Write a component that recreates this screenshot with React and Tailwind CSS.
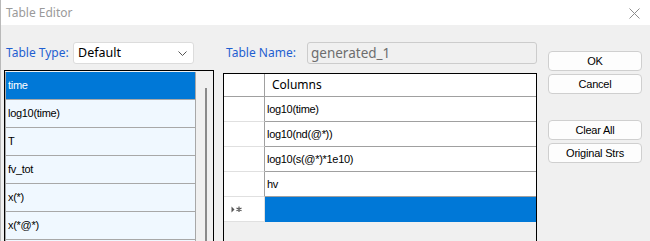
import React from "react";

const listItems = ["time", "log10(time)", "T", "fv_tot", "x(*)", "x(*@*)", ""];
const rows = ["log10(time)", "log10(nd(@*))", "log10(s(@*)*1e10)", "hv"];

function Btn({ children, className = "" }) {
  return (
    <div
      className={
        "flex h-[20px] w-[94px] items-center justify-center rounded-[4px] border border-[#cfcfcf] bg-[#fdfdfd] text-[11px] text-black [font-family:'Liberation_Sans',Arial,sans-serif] tracking-[-0.2px] " +
        className
      }
    >
      {children}
    </div>
  );
}

export default function App() {
  return (
    <div className="flex h-[241px] w-[650px] flex-col overflow-hidden border-l border-[#b9b9b9] bg-[#f0f0f0] [font-family:'Noto_Sans',sans-serif]">
      {/* title bar */}
      <div className="flex h-[25px] shrink-0 items-center justify-between bg-white pl-[5px] pr-[10px]">
        <span className="text-[12px] text-[#9a9a9a]">Table Editor</span>
        <svg width="11" height="11" viewBox="0 0 11 11" className="mt-[1px]">
          <path d="M0.5 0.5 L10.5 10.5 M10.5 0.5 L0.5 10.5" stroke="#8c8c8c" strokeWidth="1" />
        </svg>
      </div>

      {/* body */}
      <div className="flex flex-1 pt-[17px]">
        {/* left column */}
        <div className="ml-[3px] flex w-[210px] flex-col">
          <div className="flex h-[22px] items-center">
            <span className="w-[69px] pl-[2px] text-[12px] text-[#1f5fd1]">Table Type:</span>
            <div className="flex h-[22px] w-[121px] items-center justify-between rounded-[3px] border border-[#dcdcdc] bg-white pl-[4px] pr-[6px]">
              <span className="text-[12.5px] text-black">Default</span>
              <svg width="9" height="5" viewBox="0 0 9 5">
                <path d="M0.5 0.5 L4.5 4.5 L8.5 0.5" fill="none" stroke="#555" strokeWidth="1" />
              </svg>
            </div>
          </div>
          <div className="mt-[6px] flex flex-1 border border-black bg-[#f0f0f0] pt-[1px]">
            <div className="flex w-[191px] flex-col">
              {listItems.map((t, i) => (
                <div
                  key={i}
                  className={
                    "flex h-[28px] shrink-0 items-center border-x border-b border-[#a8a8a8] pl-[2px] text-[11px] tracking-[-0.3px] [font-family:'Liberation_Sans',Arial,sans-serif] " +
                    (i === 0 ? "border-[#0078d7] bg-[#0078d7] text-white" : "bg-[#f0f8ff] text-black")
                  }
                >
                  {t}
                </div>
              ))}
            </div>
            <div className="flex flex-1 justify-center pl-[2px] pt-[16px]">
              <div className="h-[200px] w-[2px] bg-[#8a8a8a]" />
            </div>
          </div>
        </div>

        {/* middle column */}
        <div className="ml-[9px] flex w-[314px] flex-col">
          <div className="flex h-[22px] items-center">
            <span className="w-[84px] pl-[3px] text-[12px] text-[#1f5fd1]">Table Name:</span>
            <div className="flex h-[22px] flex-1 items-center rounded-[3px] border border-[#cccccc] bg-[#f0f0f0] pl-[3px]">
              <span className="text-[13.5px] text-[#6d6d6d]">generated_1</span>
            </div>
          </div>
          <div className="mt-[9px] flex flex-1 flex-col border border-black bg-[#f0f0f0]">
            <div className="flex h-[23px] shrink-0 border-b border-[#a0a0a0] bg-white">
              <div className="w-[41px] border-r border-[#a0a0a0]" />
              <div className="flex items-center pl-[7px] text-[12px] text-black">Columns</div>
            </div>
            {rows.map((r) => (
              <div key={r} className="flex h-[25px] shrink-0 bg-white">
                <div className="w-[41px] border-b border-r border-[#e0e0e0] border-r-[#a0a0a0]" />
                <div className="flex flex-1 items-center border-b border-[#a0a0a0] pl-[2px] text-[11px] tracking-[-0.3px] text-black [font-family:'Liberation_Sans',Arial,sans-serif]">
                  {r}
                </div>
              </div>
            ))}
            <div className="flex h-[25px] shrink-0">
              <div className="flex w-[41px] items-center border-b border-r border-[#e0e0e0] bg-white pl-[7px]">
                <svg width="12" height="7" viewBox="0 0 12 7">
                  <path d="M0.5 0.5 L3.5 3.5 L0.5 6.5 Z" fill="#555" />
                  <path d="M8 0.5 V6 M5.5 2 L10.5 4.7 M10.5 2 L5.5 4.7" stroke="#555" strokeWidth="1.2" />
                </svg>
              </div>
              <div className="flex-1 bg-[#0078d7]" />
            </div>
          </div>
        </div>

        {/* right column */}
        <div className="ml-[11px] flex flex-col pt-[9px]">
          <Btn>OK</Btn>
          <Btn className="mt-[3px]">Cancel</Btn>
          <Btn className="mt-[26px]">Clear All</Btn>
          <Btn className="mt-[3px]">Original Strs</Btn>
        </div>
      </div>
    </div>
  );
}
